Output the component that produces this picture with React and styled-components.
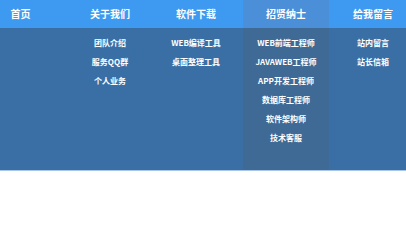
import React from 'react'
import styled, { createGlobalStyle } from 'styled-components'

const menus = [
  { title: '首页', w: 41, ml: 0, items: [] },
  { title: '关于我们', w: 86, ml: 26, items: ['团队介绍', '服务QQ群', '个人业务'] },
  { title: '软件下载', w: 86, ml: 0, items: ['WEB编译工具', '桌面整理工具'] },
  { title: '招贤纳士', w: 86, ml: 4, active: true, items: ['WEB前端工程师', 'JAVAWEB工程师', 'APP开发工程师', '数据库工程师', '软件架构师', '技术客服'] },
  { title: '给我留言', w: 86, ml: 1, items: ['站内留言', '站长信箱'] },
]

export default () =>
  <>
    <GlobalStyle />
    <StyledNav>
      {menus.map(m =>
        <StyledColumn key={m.title} $w={m.w} $ml={m.ml}>
          <StyledTitle $active={m.active}>{m.title}</StyledTitle>
          <StyledPanel $active={m.active}>
            {m.items.map(i => <StyledItem key={i}>{i}</StyledItem>)}
          </StyledPanel>
        </StyledColumn>
      )}
    </StyledNav>
  </>

const GlobalStyle = createGlobalStyle`
  body {
    margin: 0;
    background: #fff;
    font-family: "Noto Sans CJK SC", "Noto Sans", sans-serif;
  }
`

const StyledNav = styled.nav`
  display: flex;
  width: 406px;
  height: 170px;
  overflow: hidden;
  background: linear-gradient(#3d9af0 0 28px, #3a6fa6 28px);
  border-bottom: 1px solid #a9c6e6;
`

const StyledColumn = styled.div`
  flex: none;
  width: ${({ $w }) => $w}px;
  margin-left: ${({ $ml }) => $ml}px;
  display: flex;
  flex-direction: column;
`

const StyledTitle = styled.div`
  height: 28px;
  line-height: 28px;
  text-align: center;
  color: #fff;
  font-size: 10px;
  font-weight: 700;
  white-space: nowrap;
  background: ${({ $active }) => $active ? '#4b8fd8' : 'transparent'};
`

const StyledPanel = styled.div`
  flex: 1;
  padding-top: 5px;
  background: ${({ $active }) => $active ? '#3f6a95' : 'transparent'};
`

const StyledItem = styled.div`
  height: 19px;
  line-height: 19px;
  text-align: center;
  color: #fff;
  font-size: 8px;
  font-weight: 700;
  white-space: nowrap;
`
